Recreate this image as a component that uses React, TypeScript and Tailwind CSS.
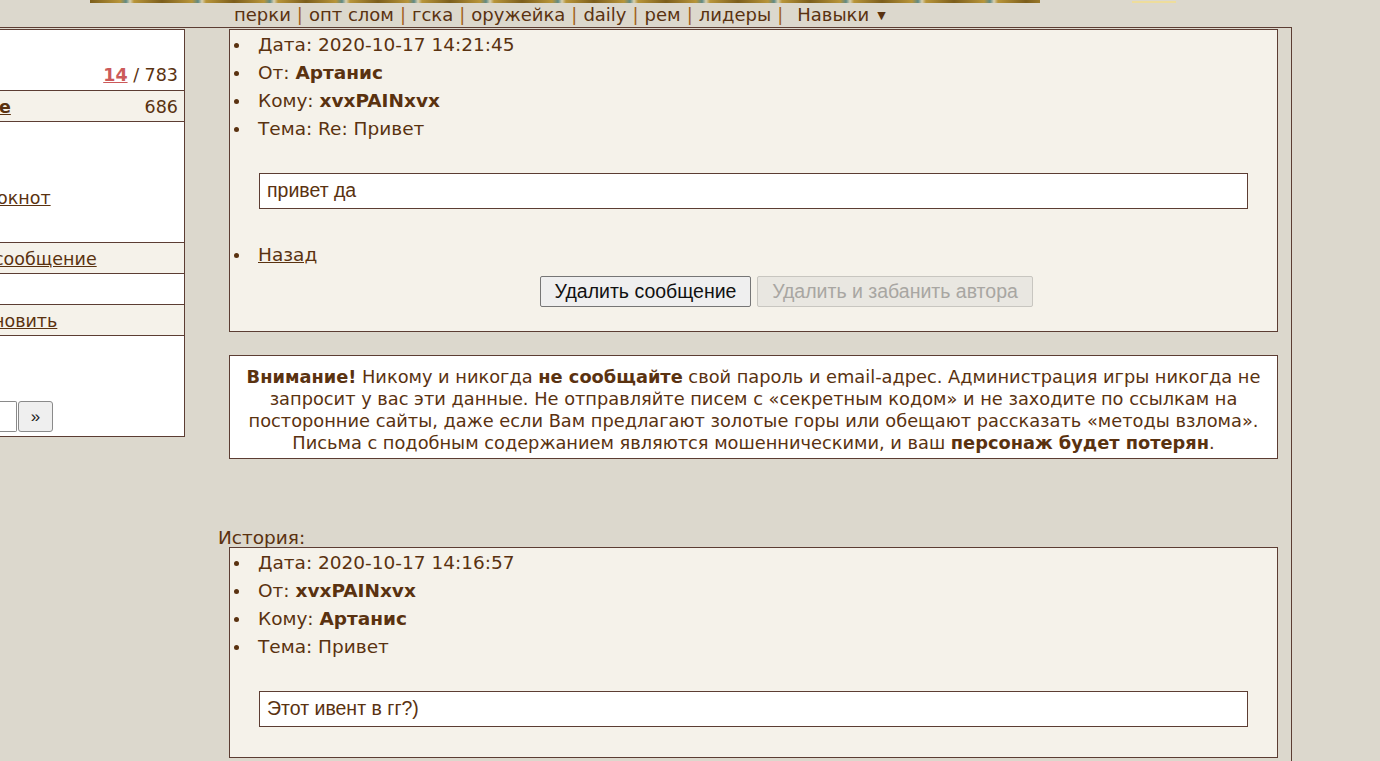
const verdana = { fontFamily: '"DejaVu Sans", Verdana, sans-serif' };

const navItems = ['перки', 'опт слом', 'гска', 'оружейка', 'daily', 'рем', 'лидеры'];

function Bullet() {
  return <span className="mr-[19px] ml-[4px] inline-block h-[5px] w-[5px] shrink-0 rounded-full bg-[#5a3210]" />;
}

function MetaList({ date, from, to, subject }: { date: string; from: string; to: string; subject: string }) {
  return (
    <ul className="pt-[1px]">
      <li className="flex h-[28px] items-center">
        <Bullet />
        Дата: {date}
      </li>
      <li className="flex h-[28px] items-center">
        <Bullet />
        От:&nbsp;<b>{from}</b>
      </li>
      <li className="flex h-[28px] items-center">
        <Bullet />
        Кому:&nbsp;<b>{to}</b>
      </li>
      <li className="flex h-[28px] items-center">
        <Bullet />
        Тема: {subject}
      </li>
    </ul>
  );
}

function MessageBody({ text }: { text: string }) {
  return (
    <div className="ml-[29px] flex h-[36px] w-[989px] items-center border border-[#5c3d33] bg-white px-[7px] font-['Liberation_Sans',Arial,sans-serif] text-[19.5px] text-[#5a3210]">
      {text}
    </div>
  );
}

function LeftPanel() {
  return (
    <div className="mt-[1px] w-[185px] shrink-0 self-start overflow-hidden border-y border-r border-[#5c3d33] bg-white text-[17.5px]">
      <div className="flex h-[61px] items-end justify-end border-b border-[#5c3d33] pb-[2px] pr-[6px]">
        <a className="font-bold text-[#cc5a5a] underline">14</a>
        <span>&nbsp;/ 783</span>
      </div>
      <div className="flex h-[31px] items-center justify-between border-b border-[#5c3d33] bg-[#f5f2ea] pr-[6px] pt-[3px]">
        <a className="-ml-[1px] font-bold underline">е</a>
        <span>686</span>
      </div>
      <div className="flex h-[121px] items-end border-b border-[#5c3d33] pb-[31px]">
        <a className="-ml-[3px] whitespace-nowrap underline">окнот</a>
      </div>
      <div className="flex h-[31px] items-center border-b border-[#5c3d33] bg-[#f5f2ea] pt-[3px]">
        <a className="-ml-[6px] whitespace-nowrap underline">сообщение</a>
      </div>
      <div className="h-[31px] border-b border-[#5c3d33]" />
      <div className="flex h-[31px] items-center border-b border-[#5c3d33] bg-[#f5f2ea] pt-[2px]">
        <a className="-ml-[7px] whitespace-nowrap underline">новить</a>
      </div>
      <div className="flex h-[100px] items-end gap-[1px] pb-[4px]">
        <div className="h-[31px] w-[17px] rounded-r-[2px] border border-l-0 border-[#8a8a8a] bg-white" />
        <button className="h-[31px] w-[35px] rounded-[3px] border border-[#8a8a8a] bg-[#efefef] font-['Liberation_Sans',Arial,sans-serif] text-[17px] text-[#222]">
          »
        </button>
      </div>
    </div>
  );
}

export default function App() {
  return (
    <div className="min-h-screen overflow-hidden bg-[#dcd8cd] text-[#5a3210]" style={verdana}>
      {/* decorative strip */}
      <div className="flex h-[3px]">
        <div className="ml-[90px] h-[3px] w-[950px] bg-[repeating-linear-gradient(90deg,#7c5e1c_0px,#b8953a_30px,#5f8a86_36px,#d8d0b0_40px,#b8953a_44px,#7c5e1c_72px)]" />
        <div className="ml-[92px] mt-[1px] h-[2px] w-[44px] bg-[#eedd9c]" />
      </div>

      {/* nav */}
      <div className="flex h-[24px] items-center pl-[234px] text-[18px] leading-none">
        {navItems.map((n, i) => (
          <span key={n} className="flex items-center">
            {i > 0 && <span className="mx-[6px] text-[#a2621e]">|</span>}
            <a>{n}</a>
          </span>
        ))}
        <span className="mx-[6px] text-[#a2621e]">|</span>
        <a className="ml-[8px]">Навыки</a>
        <span className="ml-[8px] text-[11px]">▼</span>
      </div>

      {/* frame */}
      <div className="flex min-h-[734px] w-[1292px] border-t border-r border-[#5c3d33]">
        <LeftPanel />

        <div className="ml-[33px] flex-1 pt-[1px] text-[18.5px]">
          {/* message */}
          <div className="ml-[11px] w-[1049px] border border-[#5c3d33] bg-[#f5f2ea] pb-[24px]">
            <MetaList date="2020-10-17 14:21:45" from="Артанис" to="xvxPAINxvx" subject="Re: Привет" />
            <div className="mt-[30px]">
              <MessageBody text="привет да" />
            </div>
            <ul className="mt-[32px]">
              <li className="flex h-[28px] items-center">
                <Bullet />
                <a className="underline">Назад</a>
              </li>
            </ul>
            <div className="ml-[310px] mt-[7px] flex gap-[6px] font-['Liberation_Sans',Arial,sans-serif] text-[19.5px]">
              <button className="h-[31px] w-[211px] rounded-[2px] border border-[#767676] bg-[#efefef] text-[#111]">
                Удалить сообщение
              </button>
              <button disabled className="h-[31px] w-[276px] rounded-[2px] border border-[#c8c6c0] bg-[#e9e7e1] text-[#a8a6a2]">
                Удалить и забанить автора
              </button>
            </div>
          </div>

          {/* warning */}
          <div className="ml-[11px] mt-[23px] w-[1049px] border border-[#5c3d33] bg-white pb-[4px] pt-[10px] text-center text-[17.8px] leading-[22px]">
            <b>Внимание!</b> Никому и никогда <b>не сообщайте</b> свой пароль и email-адрес. Администрация игры никогда не
            <br />
            запросит у вас эти данные. Не отправляйте писем с «секретным кодом» и не заходите по ссылкам на
            <br />
            посторонние сайты, даже если Вам предлагают золотые горы или обещают рассказать «методы взлома».
            <br />
            Письма с подобным содержанием являются мошенническими, и ваш <b>персонаж будет потерян</b>.
          </div>

          {/* history */}
          <div className="mt-[69px] h-[19px] leading-[19px]">История:</div>
          <div className="ml-[11px] w-[1049px] border border-[#5c3d33] bg-[#f5f2ea] pb-[30px]">
            <MetaList date="2020-10-17 14:16:57" from="xvxPAINxvx" to="Артанис" subject="Привет" />
            <div className="mt-[30px]">
              <MessageBody text="Этот ивент в гг?)" />
            </div>
          </div>
        </div>
      </div>
    </div>
  );
}
